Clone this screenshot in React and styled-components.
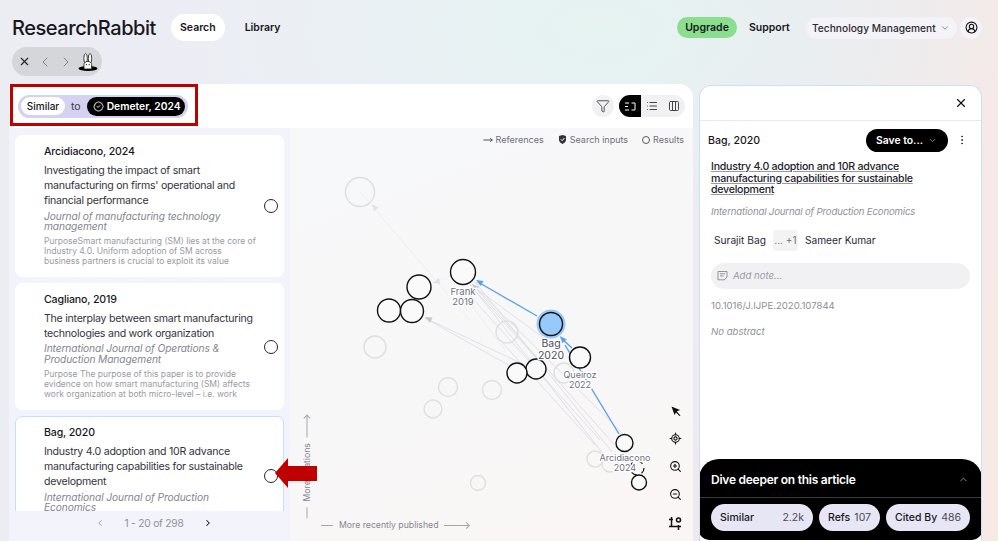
import React from 'react'
import styled, { createGlobalStyle } from 'styled-components'
import {
  X, ChevronLeft, ChevronRight, ChevronDown, ChevronUp, Filter, List, Columns3,
  EllipsisVertical, LocateFixed, ZoomIn, ZoomOut, CircleUserRound,
  BadgeCheck, MoveRight,
} from 'lucide-react'

const GlobalStyle = createGlobalStyle`
  html, body { margin: 0; padding: 0; height: 100%; }
  body {
    font-family: "Inter", "Open Sans", sans-serif;
    color: #17171c;
    overflow: hidden;
  }
  * { box-sizing: border-box; }
`

const Page = styled.div`
  position: relative;
  width: 998px;
  height: 541px;
  overflow: hidden;
  background:
    radial-gradient(420px 220px at 600px 30px, #e5f3f1 0%, rgba(229,243,241,0) 100%),
    linear-gradient(100deg, #ebedf3 0%, #eeeef6 45%, #eee9ef 75%, #f7eae5 100%);
`

const Header = styled.header`
  display: flex;
  align-items: center;
  height: 27px;
  margin: 14px 16px 0 12px;
`
const Logo = styled.h1`
  margin: 0 15px 0 0;
  width: 144px;
  font-size: 20px;
  font-weight: 500;
  letter-spacing: -0.45px;
  white-space: nowrap;
  color: #17171c;
`
const NavPill = styled.div`
  height: 27px;
  padding: 0 ${(p) => (p.$active ? '9px' : '20px')};
  border-radius: 14px;
  background: ${(p) => (p.$active ? '#fff' : 'transparent')};
  font-size: 10.5px;
  font-weight: 600;
  line-height: 27px;
`
const HeaderRight = styled.div`
  display: flex;
  align-items: center;
  margin-left: auto;
`
const Upgrade = styled.div`
  width: 60px;
  height: 21px;
  border-radius: 11px;
  background: #8ade8e;
  font-size: 10.5px;
  font-weight: 600;
  line-height: 21px;
  text-align: center;
`
const Support = styled.div`
  width: 41px;
  margin: 0 16px 0 12px;
  font-size: 10.5px;
  font-weight: 600;
  white-space: nowrap;
`
const OrgSelect = styled.div`
  display: flex;
  align-items: center;
  justify-content: space-between;
  width: 151px;
  height: 22px;
  padding: 0 7px 0 6px;
  border-radius: 11px;
  background: #f4f3f7;
  font-size: 10.2px;
  font-weight: 500;
  color: #2a2a33;
  white-space: nowrap;
`
const Avatar = styled.div`
  display: flex;
  align-items: center;
  justify-content: center;
  width: 22px;
  height: 22px;
  margin-left: 3px;
  border-radius: 50%;
  background: #f4f3f7;
`

const HistoryPill = styled.div`
  display: flex;
  align-items: center;
  gap: 5.5px;
  width: 90px;
  height: 29px;
  margin: 6px 0 8px 12px;
  padding-left: 6px;
  border-radius: 15px;
  background: #d5d6da;
`
const RabbitSvg = styled.svg`
  margin-left: -2px;
`

const Workspace = styled.main`
  display: flex;
  gap: 6px;
  height: 457px;
  padding-left: 9px;
`
const LeftPanel = styled.section`
  display: flex;
  flex-direction: column;
  width: 684px;
  border-radius: 0 14px 0 0;
  overflow: hidden;
`
const Toolbar = styled.div`
  display: flex;
  align-items: center;
  justify-content: space-between;
  flex: 0 0 44px;
  padding: 0 8px 0 9px;
  background: #fff;
`
const QueryPill = styled.div`
  display: flex;
  align-items: center;
  width: 170px;
  height: 23px;
  padding: 0 3px;
  border-radius: 12px;
  background: #d5d1f0;
  font-size: 10.5px;
  color: #3b3b48;
`
const SimilarChip = styled.div`
  width: 44px;
  height: 18px;
  margin-right: 6px;
  border-radius: 9px;
  background: #fff;
  color: #17171c;
  font-size: 10px;
  font-weight: 500;
  line-height: 18px;
  text-align: center;
`
const SeedChip = styled.div`
  display: flex;
  align-items: center;
  gap: 3px;
  width: 98px;
  height: 19px;
  margin-left: 6px;
  padding-left: 6px;
  border-radius: 10px;
  background: #000;
  color: #fff;
  font-size: 10.3px;
  font-weight: 600;
  white-space: nowrap;
`
const ToolbarRight = styled.div`
  display: flex;
  align-items: center;
  gap: 5px;
`
const RoundButton = styled.div`
  display: flex;
  align-items: center;
  justify-content: center;
  width: 22px;
  height: 22px;
  border-radius: 50%;
  background: #f1f1f3;
`
const ViewToggle = styled.div`
  display: flex;
  width: 66px;
  height: 22px;
  border-radius: 11px;
  background: #f1f1f3;
  overflow: hidden;
`
const ViewOption = styled.div`
  display: flex;
  align-items: center;
  justify-content: center;
  flex: 1;
  background: ${(p) => (p.$active ? '#000' : 'transparent')};
`

const PanelBody = styled.div`
  display: flex;
  flex: 1;
  min-height: 0;
`
const ListColumn = styled.div`
  display: flex;
  flex-direction: column;
  flex: 0 0 281px;
  background: #f3f4fb;
`
const CardList = styled.div`
  display: flex;
  flex-direction: column;
  gap: 6px;
  height: 383px;
  padding: 7px 6px 0 6px;
  overflow: hidden;
`
const Card = styled.article`
  display: flex;
  align-items: center;
  flex: 0 0 auto;
  height: ${(p) => p.$height}px;
  padding: 0 5px 0 28px;
  border: 1px solid ${(p) => (p.$selected ? '#c4dffb' : '#fff')};
  border-radius: 7px;
  background: #fff;
`
const CardText = styled.div`
  flex: 1;
  align-self: flex-start;
  padding-top: 9px;
  white-space: pre-line;
`
const CardAuthor = styled.div`
  margin-bottom: 4px;
  font-size: 10.6px;
  font-weight: 500;
  letter-spacing: -0.15px;
  line-height: 14px;
  color: #17171c;
`
const CardTitle = styled.div`
  font-size: 10.6px;
  letter-spacing: -0.25px;
  line-height: 15.2px;
  white-space: pre;
  color: #34343c;
`
const CardJournal = styled.div`
  margin-top: 2px;
  font-size: 10.2px;
  font-style: italic;
  letter-spacing: -0.1px;
  line-height: 10.2px;
  color: #85858f;
`
const CardAbstract = styled.div`
  margin-top: 5px;
  font-size: 8.5px;
  line-height: 10.2px;
  color: #9a9aa3;
`
const Radio = styled.div`
  flex: 0 0 14px;
  height: 14px;
  border: 1px solid #26262c;
  border-radius: 50%;
  background: #fff;
`
const Pager = styled.div`
  display: flex;
  align-items: center;
  justify-content: center;
  gap: 19px;
  height: 24px;
  padding-left: 9px;
  font-size: 10.2px;
  letter-spacing: -0.2px;
  color: #8f8f99;
`

const GraphPane = styled.div`
  position: relative;
  flex: 1;
  background: linear-gradient(160deg, #f7f8fa 0%, #f8f7f7 60%, #faf6f5 100%);
`
const GraphSvg = styled.svg`
  display: block;
  width: 100%;
  height: 100%;
`
const Legend = styled.div`
  position: absolute;
  top: 6px;
  right: 9px;
  display: flex;
  gap: 14px;
  font-size: 9px;
  color: #6f6f79;
`
const LegendItem = styled.div`
  display: flex;
  align-items: center;
  gap: 3px;
  white-space: nowrap;
`
const LegendDot = styled.span`
  width: 8px;
  height: 8px;
  border: 1px solid #55555f;
  border-radius: 50%;
`
const AxisLabel = styled.div`
  position: absolute;
  display: flex;
  align-items: center;
  gap: 6px;
  font-size: 8.7px;
  color: #85858f;
  white-space: nowrap;
`
const AxisY = styled(AxisLabel)`
  left: -36.5px;
  top: 332.5px;
  height: 10px;
  width: 105px;
  transform: rotate(-90deg);
`
const AxisX = styled(AxisLabel)`
  left: 31px;
  bottom: 11px;
`
const AxisRule = styled.span`
  position: relative;
  width: ${(p) => p.$w}px;
  height: 1px;
  background: #a6a6ae;
  &::after {
    content: "";
    display: ${(p) => (p.$arrow ? 'block' : 'none')};
    position: absolute;
    right: 0;
    top: -2px;
    width: 4px;
    height: 4px;
    border-top: 1px solid #a6a6ae;
    border-right: 1px solid #a6a6ae;
    transform: rotate(45deg);
  }
`
const GraphTools = styled.div`
  position: absolute;
  right: 10px;
  top: 277px;
  display: flex;
  flex-direction: column;
  align-items: center;
  gap: 15px;
`

const DetailPanel = styled.aside`
  position: relative;
  display: flex;
  flex-direction: column;
  width: 283px;
  margin-top: 1px;
  border: 1px solid #c7e0fb;
  border-bottom: 0;
  border-radius: 12px 12px 0 0;
  background: #fff;
  overflow: hidden;
`
const DetailTop = styled.div`
  display: flex;
  align-items: center;
  justify-content: flex-end;
  flex: 0 0 35px;
  padding-right: 13px;
  border-bottom: 1px solid #e6eaf0;
`
const DetailBody = styled.div`
  padding: 7px 11px 0 11px;
`
const DetailHead = styled.div`
  display: flex;
  align-items: center;
  height: 24px;
  margin-left: -3px;
  font-size: 10.6px;
  font-weight: 500;
`
const SaveButton = styled.div`
  display: flex;
  align-items: center;
  justify-content: space-between;
  width: 82px;
  height: 23px;
  margin-left: auto;
  padding: 0 11px 0 10px;
  border-radius: 12px;
  background: #000;
  color: #fff;
  font-size: 10.4px;
  font-weight: 600;
`
const Kebab = styled.div`
  display: flex;
  margin: 0 2px 0 8px;
`
const DetailTitle = styled.div`
  margin-top: 9px;
  font-size: 10.6px;
  font-weight: 500;
  letter-spacing: -0.25px;
  line-height: 11.6px;
  white-space: pre-line;
  text-decoration: underline;
  text-decoration-color: #9a9aa3;
  color: #22222a;
`
const DetailJournal = styled.div`
  margin-top: 10px;
  font-size: 9.6px;
  font-style: italic;
  letter-spacing: -0.15px;
  line-height: 12px;
  color: #8f8f99;
`
const Authors = styled.div`
  display: flex;
  align-items: center;
  gap: 7px;
  height: 21px;
  margin-top: 12px;
  padding-left: 3px;
  font-size: 10.2px;
  color: #2a2a33;
`
const MoreAuthors = styled.div`
  width: 25px;
  height: 21px;
  border-radius: 3px;
  background: #f3f3f4;
  font-size: 10px;
  line-height: 21px;
  text-align: center;
  color: #6f6f79;
`
const NoteField = styled.div`
  display: flex;
  align-items: center;
  gap: 5px;
  width: 259px;
  height: 26px;
  margin-top: 12px;
  padding-left: 6px;
  border-radius: 13px;
  background: #f1f1f3;
  font-size: 9.6px;
  font-style: italic;
  color: #9a9aa3;
`
const Doi = styled.div`
  margin-top: 11px;
  font-size: 9.6px;
  line-height: 12px;
  color: #8f8f99;
`
const NoAbstract = styled.div`
  margin-top: 14px;
  font-size: 9.6px;
  font-style: italic;
  line-height: 12px;
  color: #8f8f99;
`
const DivePanel = styled.div`
  position: absolute;
  left: -1px;
  right: -1px;
  bottom: 1px;
  height: 81px;
  border-radius: 20px 20px 10px 10px;
  background: #000;
`
const DiveHead = styled.div`
  display: flex;
  align-items: center;
  justify-content: space-between;
  height: 39px;
  padding: 2px 13px 0 12px;
  border-bottom: 1px solid #3a3a42;
  color: #fff;
  font-size: 12px;
  font-weight: 600;
  letter-spacing: -0.25px;
`
const DiveRow = styled.div`
  display: flex;
  gap: 6px;
  padding: 6px 12px 0;
`
const DiveChip = styled.div`
  display: flex;
  align-items: center;
  justify-content: space-between;
  width: ${(p) => p.$w}px;
  height: 27px;
  padding: 0 9px;
  border-radius: 14px;
  background: #e6e6f5;
  font-size: 10.5px;
  font-weight: 500;
  color: #17171c;
  white-space: nowrap;
`
const DiveCount = styled.span`
  font-weight: 400;
  color: #4a4a55;
`

const RedBox = styled.div`
  position: absolute;
  left: 10px;
  top: 84px;
  width: 188px;
  height: 42px;
  border: 3px solid #c00000;
  pointer-events: none;
`
const RedArrow = styled.svg`
  position: absolute;
  left: 275px;
  top: 458px;
`

const Similar = [
  {
    height: 142,
    author: 'Arcidiacono, 2024',
    title: 'Investigating the impact of smart\nmanufacturing on firms\' operational and\nfinancial performance',
    journal: 'Journal of manufacturing technology\nmanagement',
    abstract: 'PurposeSmart manufacturing (SM) lies at the core of\nIndustry 4.0. Uniform adoption of SM across\nbusiness partners is crucial to exploit its value',
  },
  {
    height: 127,
    author: 'Cagliano, 2019',
    title: 'The interplay between smart manufacturing\ntechnologies and work organization',
    journal: 'International Journal of Operations &\nProduction Management',
    abstract: 'Purpose The purpose of this paper is to provide\nevidence on how smart manufacturing (SM) affects\nwork organization at both micro-level – i.e. work',
  },
  {
    height: 120,
    selected: true,
    author: 'Bag, 2020',
    title: 'Industry 4.0 adoption and 10R advance\nmanufacturing capabilities for sustainable\ndevelopment',
    journal: 'International Journal of Production\nEconomics',
    abstract: '',
  },
]

const faintNodes = [
  [360, 192, 14.5], [507, 332, 11], [375, 347, 11], [448, 387, 9.5], [492, 390, 9.5],
  [564, 373, 10], [433, 409, 9], [595, 459, 8], [610, 464, 8], [478, 483, 7.5],
]
const blackNodes = [
  [536, 369, 10], [517, 373, 10], [419, 287, 12], [389, 310.5, 11.5], [412, 311, 11.5],
  [463, 272, 12.5], [580, 357.5, 10.5], [624.5, 443, 8.5], [639, 482.5, 7.5],
]
const greyEdges = [
  [619, 450, 472, 284], [612, 452, 475, 282], [605, 456, 470, 284], [625, 436, 472, 284],
  [538, 360, 470, 285], [527, 366, 425, 318], [510, 366, 425, 318], [560, 350, 473, 286],
  [600, 440, 465, 290], [595, 445, 500, 340],
]
const faintEdges = [
  [360, 192, 470, 320], [452, 276, 432, 283], [610, 464, 540, 372], [505, 350, 460, 290],
]

const Arrow = ({ x, y, angle, color }) => (
  <polygon points="0,0 7,-3 7,3" fill={color} transform={`translate(${x} ${y}) rotate(${angle})`} />
)

const NodeLabel = styled.text`
  font-family: "Inter", sans-serif;
  font-size: ${(p) => p.$size}px;
  fill: ${(p) => p.$color};
  text-anchor: middle;
  paint-order: stroke;
  stroke: #fff;
  stroke-width: 2.5px;
`

const Label = ({ x, y, size, color, gap, lines }) => (
  <NodeLabel x={x} y={y} $size={size} $color={color}>
    <tspan x={x} y={y}>{lines[0]}</tspan>
    <tspan x={x} y={y + gap}>{lines[1]}</tspan>
  </NodeLabel>
)

const Graph = () => (
  <GraphSvg viewBox="290 128 403 413">
    {faintEdges.map(([a, b, c, d], i) => (
      <line key={i} x1={a} y1={b} x2={c} y2={d} stroke="#ebecf0" strokeWidth="0.8" />
    ))}
    {greyEdges.map(([a, b, c, d], i) => (
      <line key={i} x1={a} y1={b} x2={c} y2={d} stroke="#d9dbe3" strokeWidth="0.8" />
    ))}
    <Arrow x={372} y={204} angle={52} color="#e2e3e8" />
    <Arrow x={433} y={283} angle={-18} color="#e2e3e8" />
    <Arrow x={425} y={317} angle={27} color="#c5c9d3" />
    <Arrow x={472} y={284} angle={45} color="#c5c9d3" />
    {faintNodes.map(([x, y, r], i) => (
      <circle key={i} cx={x} cy={y} r={r} fill="none" stroke="#dfdfe3" strokeWidth="1.4" />
    ))}
    <line x1={537} y1={316} x2={478} y2={282} stroke="#589ff5" strokeWidth="1.4" />
    <Arrow x={476} y={280} angle={30} color="#589ff5" />
    <line x1={619} y1={434} x2={565} y2={345} stroke="#589ff5" strokeWidth="1.4" />
    <line x1={572} y1={348} x2={561} y2={338} stroke="#589ff5" strokeWidth="1.4" />
    <Arrow x={560} y={336} angle={50} color="#589ff5" />
    <circle cx={551} cy={324} r={14.5} fill="#98c9fb" />
    <circle cx={551} cy={324} r={11.5} fill="#98c9fb" stroke="#111" strokeWidth="1.4" />
    {blackNodes.map(([x, y, r], i) => (
      <circle key={i} cx={x} cy={y} r={r} fill="#fafafa" stroke="#111" strokeWidth="1.4" />
    ))}
    <circle cx={637} cy={468} r={7} fill="none" stroke="#111" strokeWidth="1.2" strokeDasharray="6 5" />
    <Label x={463} y={295} size={9.5} gap={10} color="#6f7080" lines={['Frank', '2019']} />
    <Label x={551} y={347} size={10.5} gap={12} color="#4d4e5a" lines={['Bag', '2020']} />
    <Label x={580} y={378} size={9} gap={10} color="#6f7080" lines={['Queiroz', '2022']} />
    <Label x={625} y={461} size={9} gap={10} color="#6f7080" lines={['Arcidiacono', '2024']} />
  </GraphSvg>
)

const RabbitHole = () => (
  <RabbitSvg width="20" height="20" viewBox="0 0 20 20">
    <ellipse cx="10" cy="16.5" rx="9.5" ry="2.4" fill="#000" />
    <ellipse cx="7.6" cy="6.5" rx="1.7" ry="5" fill="#fff" stroke="#111" strokeWidth="0.8" />
    <ellipse cx="12" cy="6.5" rx="1.7" ry="5" fill="#fff" stroke="#111" strokeWidth="0.8" />
    <path d="M6 17V12.5C6 10.5 7.8 9.5 9.8 9.5S13.6 10.5 13.6 12.5V17Z" fill="#fff" stroke="#111" strokeWidth="0.8" />
    <circle cx="8.4" cy="12.6" r="0.6" fill="#111" />
    <circle cx="11.2" cy="12.6" r="0.6" fill="#111" />
  </RabbitSvg>
)

const CropGear = () => (
  <svg width="15" height="15" viewBox="0 0 15 15" fill="none" stroke="#111" strokeWidth="1.5">
    <path d="M3.5 1v9.5H13M1 3.5h4M10.5 9v5M3.5 10.5H1" />
    <circle cx="10.5" cy="4" r="2" strokeWidth="1.5" />
  </svg>
)

const NoteIcon = () => (
  <svg width="11" height="11" viewBox="0 0 11 11" fill="none" stroke="#88888f" strokeWidth="0.9">
    <path d="M1 1.5h9v5.5L7.5 9.8H1ZM3 3.8h5M3 6h3.5" />
  </svg>
)

const SeedMark = () => (
  <svg width="9" height="9" viewBox="0 0 9 9">
    <path d="M1 1 4.5 0 8 1V5C8 7 6 8.3 4.5 9 3 8.3 1 7 1 5Z" fill="#33333c" />
    <path d="M2.8 4.3 4.2 5.7 6.4 3" fill="none" stroke="#fff" strokeWidth="1" />
  </svg>
)

export default function App() {
  return (
    <Page>
      <GlobalStyle />
      <Header>
        <Logo>ResearchRabbit</Logo>
        <NavPill $active>Search</NavPill>
        <NavPill>Library</NavPill>
        <HeaderRight>
          <Upgrade>Upgrade</Upgrade>
          <Support>Support</Support>
          <OrgSelect>
            Technology Management
            <ChevronDown size={10} color="#777" />
          </OrgSelect>
          <Avatar><CircleUserRound size={13} color="#111" /></Avatar>
        </HeaderRight>
      </Header>

      <HistoryPill>
        <X size={13} color="#222" />
        <ChevronLeft size={16} color="#77777f" strokeWidth={1.3} />
        <ChevronRight size={16} color="#77777f" strokeWidth={1.3} />
        <RabbitHole />
      </HistoryPill>

      <Workspace>
        <LeftPanel>
          <Toolbar>
            <QueryPill>
              <SimilarChip>Similar</SimilarChip>
              to
              <SeedChip><BadgeCheck size={11} />Demeter, 2024</SeedChip>
            </QueryPill>
            <ToolbarRight>
              <RoundButton><Filter size={14} color="#333" strokeWidth={1.4} /></RoundButton>
              <ViewToggle>
                <ViewOption $active>
                  <svg width="12" height="9" viewBox="0 0 12 9" fill="none" stroke="#fff" strokeWidth="1">
                    <path d="M1 1h4M1 4.5h3M1 8h4M7.5 1H11V8H7.5" />
                  </svg>
                </ViewOption>
                <ViewOption><List size={12} color="#444" /></ViewOption>
                <ViewOption><Columns3 size={12} color="#444" /></ViewOption>
              </ViewToggle>
            </ToolbarRight>
          </Toolbar>
          <PanelBody>
            <ListColumn>
              <CardList>
                {Similar.map((item) => (
                  <Card key={item.author} $height={item.height} $selected={item.selected}>
                    <CardText>
                      <CardAuthor>{item.author}</CardAuthor>
                      <CardTitle>{item.title}</CardTitle>
                      <CardJournal>{item.journal}</CardJournal>
                      {item.abstract && <CardAbstract>{item.abstract}</CardAbstract>}
                    </CardText>
                    <Radio />
                  </Card>
                ))}
              </CardList>
              <Pager>
                <ChevronLeft size={10} color="#8f8f99" />
                <span>1 - 20 of 298</span>
                <ChevronRight size={10} color="#111" strokeWidth={2.5} />
              </Pager>
            </ListColumn>
            <GraphPane>
              <Graph />
              <Legend>
                <LegendItem><MoveRight size={10} color="#33333c" />References</LegendItem>
                <LegendItem><SeedMark />Search inputs</LegendItem>
                <LegendItem><LegendDot />Results</LegendItem>
              </Legend>
              <AxisY>
                <AxisRule $w={11} />
                More citations
                <AxisRule $w={22} $arrow />
              </AxisY>
              <AxisX>
                <AxisRule $w={12} />
                More recently published
                <AxisRule $w={25} $arrow />
              </AxisX>
              <GraphTools>
                <svg width="12" height="12" viewBox="0 0 12 12"><path d="M1.5 1.5 10 5 6.8 6.5 10.5 10.5 9.5 11 6 7.5 4.5 10Z" fill="#111" /></svg>
                <LocateFixed size={13} color="#111" />
                <ZoomIn size={13} color="#111" />
                <ZoomOut size={13} color="#111" />
                <CropGear />
              </GraphTools>
            </GraphPane>
          </PanelBody>
        </LeftPanel>

        <DetailPanel>
          <DetailTop><X size={14} color="#111" /></DetailTop>
          <DetailBody>
            <DetailHead>
              Bag, 2020
              <SaveButton>Save to...<ChevronDown size={9} color="#aaa" /></SaveButton>
              <Kebab><EllipsisVertical size={12} color="#333" /></Kebab>
            </DetailHead>
            <DetailTitle>{'Industry 4.0 adoption and 10R advance\nmanufacturing capabilities for sustainable\ndevelopment'}</DetailTitle>
            <DetailJournal>International Journal of Production Economics</DetailJournal>
            <Authors>
              <span>Surajit Bag</span>
              <MoreAuthors>... +1</MoreAuthors>
              <span>Sameer Kumar</span>
            </Authors>
            <NoteField><NoteIcon />Add note...</NoteField>
            <Doi>10.1016/J.IJPE.2020.107844</Doi>
            <NoAbstract>No abstract</NoAbstract>
          </DetailBody>
          <DivePanel>
            <DiveHead>Dive deeper on this article<ChevronUp size={11} color="#999" /></DiveHead>
            <DiveRow>
              <DiveChip $w={102}>Similar<DiveCount>2.2k</DiveCount></DiveChip>
              <DiveChip $w={61}>Refs<DiveCount>107</DiveCount></DiveChip>
              <DiveChip $w={84}>Cited By<DiveCount>486</DiveCount></DiveChip>
            </DiveRow>
          </DivePanel>
        </DetailPanel>
      </Workspace>

      <RedBox />
      <RedArrow width="42" height="30" viewBox="0 0 42 30">
        <path d="M0 15 13 0V8H42V23H13V30Z" fill="#c00000" />
      </RedArrow>
    </Page>
  )
}
